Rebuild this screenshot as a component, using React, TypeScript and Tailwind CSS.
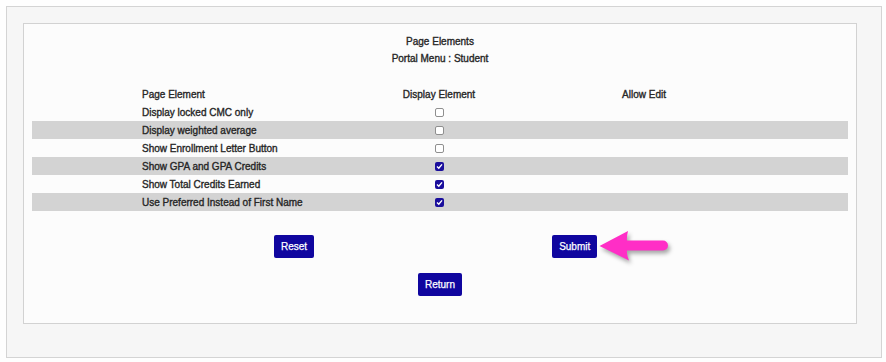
const rows = [
  { label: 'Display locked CMC only', checked: false },
  { label: 'Display weighted average', checked: false },
  { label: 'Show Enrollment Letter Button', checked: false },
  { label: 'Show GPA and GPA Credits', checked: true },
  { label: 'Show Total Credits Earned', checked: true },
  { label: 'Use Preferred Instead of First Name', checked: true },
]

function Box({ checked }: { checked: boolean }) {
  if (!checked) {
    return <span className="block h-[9px] w-[9px] rounded-[2px] border border-[#8f8f8f] bg-white" />
  }
  return (
    <span className="flex h-[9px] w-[9px] items-center justify-center rounded-[2px] bg-[#1a0e9c]">
      <svg width="7" height="7" viewBox="0 0 7 7">
        <path d="M1 3.6 L2.8 5.3 L6 1.4" fill="none" stroke="#fff" strokeWidth="1.4" />
      </svg>
    </span>
  )
}

function Btn({ children }: { children: string }) {
  return (
    <button className="h-[23px] rounded-[2px] bg-[#10069f] px-[7px] text-[10px] text-white [-webkit-text-stroke:0.25px_white]">
      {children}
    </button>
  )
}

export default function App() {
  return (
    <div className="min-h-screen bg-[#fefefe] p-[6px] font-['Liberation_Sans',Arial,sans-serif] text-[10px] text-[#262626] [-webkit-text-stroke:0.35px_#262626]">
      <div className="h-[352px] w-[876px] border border-[#d4d4d4] bg-[#f6f6f6] pl-[16px] pr-[24px] pt-[16px]">
        <div className="h-[301px] border border-[#d2d2d2] bg-[#fcfcfc] pt-[9px]">
          <div className="text-center leading-[17px]">
            <div>Page Elements</div>
            <div>Portal Menu : Student</div>
          </div>

          <div className="mx-[8px] mt-[18px]">
            <div className="grid h-[18px] grid-cols-[110px_194px_206px_204px_1fr] items-center">
              <span />
              <span>Page Element</span>
              <span className="text-center">Display Element</span>
              <span className="text-center">Allow Edit</span>
              <span />
            </div>
            {rows.map((r, i) => (
              <div
                key={r.label}
                className={
                  i % 2 === 1
                    ? 'grid h-[18px] grid-cols-[110px_194px_206px_204px_1fr] items-center bg-[#d3d3d3]'
                    : 'grid h-[18px] grid-cols-[110px_194px_206px_204px_1fr] items-center'
                }
              >
                <span />
                <span>{r.label}</span>
                <span className="flex justify-center">
                  <Box checked={r.checked} />
                </span>
                <span />
                <span />
              </div>
            ))}
          </div>

          <div className="relative mt-[24px] flex pl-[250px]">
            <Btn>Reset</Btn>
            <div className="ml-[238px]">
              <Btn>Submit</Btn>
            </div>
            {/* annotation arrow */}
            <svg
              className="absolute left-[572px] top-[-7px] drop-shadow-[2px_3px_2px_rgba(0,0,0,0.35)]"
              width="80"
              height="40"
              viewBox="0 0 80 40"
            >
              <path
                d="M3.5 18 L32 3 Q30.5 9 31 12.5 L67 12.5 A5 5 0 0 1 67 22.5 L31 22.5 Q30.5 27 33 32.5 Z"
                fill="#ff2ec6"
              />
            </svg>
          </div>

          <div className="mt-[15px] flex justify-center">
            <Btn>Return</Btn>
          </div>
        </div>
      </div>
    </div>
  )
}
